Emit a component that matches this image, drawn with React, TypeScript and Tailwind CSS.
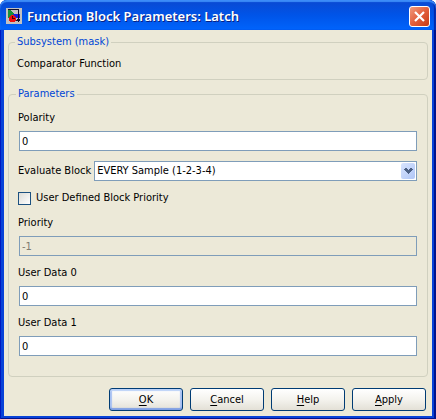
import { useState } from "react"
import type { ReactNode } from "react"

/* ---------- Icons ---------- */
function BlockIcon() {
  return (
    <svg className="h-4 w-4 shrink-0" viewBox="0 0 16 16" shapeRendering="crispEdges" aria-hidden="true">
      <rect width="16" height="16" fill="#c3c1c0" />
      <path d="M2 2H4L8 6V8L2 10Z" fill="#18903c" />
      <rect x="7" y="6" width="7" height="4" fill="#1c1ce0" />
      <path d="M2 1.5H13M12.5 1V14M10 12.5H14M11 11.5H14" fill="none" stroke="#101030" strokeWidth="1" />
      <circle cx="6.5" cy="10.5" r="3.5" fill="#f01010" />
      <path d="M6.5 8V10.5H9" fill="none" stroke="#500000" strokeWidth="1" />
    </svg>
  )
}

function CloseIcon() {
  return (
    <svg className="h-[11px] w-[11px]" viewBox="0 0 11 11" aria-hidden="true">
      <path d="M1 1L10 10M10 1L1 10" stroke="#fff" strokeWidth="2.2" />
    </svg>
  )
}

function ChevronIcon() {
  return (
    <svg className="h-[6px] w-[9px]" viewBox="0 0 9 6" shapeRendering="crispEdges" aria-hidden="true">
      <path
        d="M1 0h2v1h1v1h1v-1h1v-1h2v1h1v1h-1v1h-1v1h-1v1h-1v1h-1v-1h-1v-1h-1v-1h-1v-1h-1v-1h1z"
        fill="#4d6185"
      />
    </svg>
  )
}

/* ---------- Form pieces ---------- */
function Group({ title, className, children }: { title: string; className: string; children: ReactNode }) {
  return (
    <fieldset className={`min-w-0 rounded-[4px] border border-[#d0d0bf] ${className}`}>
      <legend className="-ml-[2px] h-4 px-[2px] leading-4 text-[#0046d5]">{title}</legend>
      {children}
    </fieldset>
  )
}

function TextField({
  id,
  label,
  initial,
  disabled = false,
}: {
  id: string
  label: string
  initial: string
  disabled?: boolean
}) {
  const [value, setValue] = useState(initial)

  return (
    <div className="flex flex-col">
      <label htmlFor={id} className="mb-[5px] h-4 leading-4">
        {label}
      </label>
      <input
        id={id}
        type="text"
        value={value}
        disabled={disabled}
        onChange={(e) => setValue(e.target.value)}
        className="ml-px h-5 border border-[#7f9db9] bg-white px-[2px] outline-none disabled:bg-[#ece9d8] disabled:text-[#7d7b70]"
      />
    </div>
  )
}

function DialogButton({ label, primary = false }: { label: string; primary?: boolean }) {
  return (
    <button
      type="button"
      className={`h-[23px] w-[74px] rounded-[3px] border border-[#003c74] bg-linear-to-b from-white via-[#f4f3ee] to-[#e3e0d6] leading-4 ${
        primary ? "shadow-[inset_0_2px_1px_#bcd2f8,inset_0_-2px_1px_#7f9fe4,inset_2px_0_1px_#a9c1f2,inset_-2px_0_1px_#a9c1f2]" : ""
      }`}
    >
      <span className="underline underline-offset-2">{label[0]}</span>
      {label.slice(1)}
    </button>
  )
}

/* ---------- Dialog ---------- */
export default function App() {
  const [rate, setRate] = useState("every")
  const [userPriority, setUserPriority] = useState(false)

  return (
    <div className="flex min-h-screen flex-col rounded-t-[7px] bg-[#0842d8] font-['DejaVu_Sans_Condensed','Noto_Sans',sans-serif] text-[11px] text-black shadow-[inset_1px_0_#0019c0,inset_-2px_0_#00138c,inset_0_-2px_#00138c]">
      <header className="flex h-[30px] items-center gap-[5px] rounded-t-[7px] bg-linear-to-b from-[#0a48d0] via-[#0054e8] to-[#0064fc] pt-[2px] pr-[6px] pl-[6px] shadow-[inset_0_2px_1px_#3c8cf8,inset_-2px_0_1px_#0026a8]">
        <BlockIcon />
        <h1 className="flex-1 truncate font-['Noto_Sans','Open_Sans',sans-serif] text-[13px] leading-5 font-semibold text-white [text-shadow:1px_1px_#0a1f80]">
          Function Block Parameters: Latch
        </h1>
        <button
          type="button"
          aria-label="Close"
          className="flex h-[21px] w-[21px] items-center justify-center rounded-[3px] border border-white bg-linear-to-br from-[#f0997c] via-[#e25f3c] to-[#c83a10]"
        >
          <CloseIcon />
        </button>
      </header>

      <main className="mx-1 mb-1 flex flex-1 flex-col bg-[#ece9d8] px-1 pt-1 pb-[5px]">
        <Group title="Subsystem (mask)" className="px-2 pb-[7px]">
          <p className="mt-[6px] h-4 leading-4">Comparator Function</p>
        </Group>

        <Group title="Parameters" className="mt-[6px] pr-[10px] pb-5 pl-[9px]">
          <div className="flex flex-col pt-2">
            <TextField id="polarity" label="Polarity" initial="0" />

            <div className="mt-[10px] flex h-5 items-center gap-[3px]">
              <label htmlFor="rate" className="whitespace-nowrap">
                Evaluate Block
              </label>
              <div className="relative flex-1">
                <select
                  id="rate"
                  value={rate}
                  onChange={(e) => setRate(e.target.value)}
                  className="block h-5 w-full appearance-none border border-[#7f9db9] bg-white pr-5 pl-[2px] outline-none"
                >
                  <option value="every">EVERY Sample (1-2-3-4)</option>
                </select>
                <span className="pointer-events-none absolute top-[2px] right-[2px] flex h-4 w-[14px] items-center justify-center rounded-[2px] bg-linear-to-br from-[#d8e4fe] to-[#b0c6f6]">
                  <ChevronIcon />
                </span>
              </div>
            </div>

            <div className="my-2 flex h-[18px] items-center gap-[5px]">
              <input
                id="user-priority"
                type="checkbox"
                checked={userPriority}
                onChange={(e) => setUserPriority(e.target.checked)}
                className="h-[13px] w-[13px] appearance-none border border-[#1c5180] bg-linear-to-br from-[#dcdcd7] to-white checked:bg-[#21a121]"
              />
              <label htmlFor="user-priority">User Defined Block Priority</label>
            </div>

            <div className="flex flex-col gap-[9px]">
              <TextField id="priority" label="Priority" initial="-1" disabled={!userPriority} />
              <TextField id="user-data-0" label="User Data 0" initial="0" />
              <TextField id="user-data-1" label="User Data 1" initial="0" />
            </div>
          </div>
        </Group>

        <div className="mt-[11px] flex justify-end gap-[7px] pr-[2px]">
          <DialogButton label="OK" primary />
          <DialogButton label="Cancel" />
          <DialogButton label="Help" />
          <DialogButton label="Apply" />
        </div>
      </main>
    </div>
  )
}
